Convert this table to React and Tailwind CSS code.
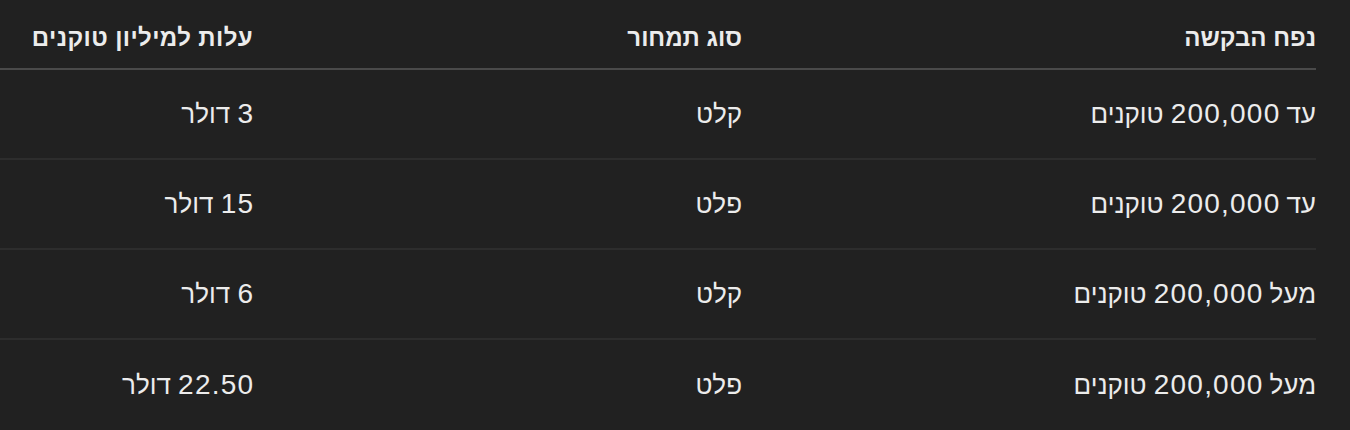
import React from "react";

const rows = [
  ["עד 200,000 טוקנים", "קלט", "3 דולר"],
  ["עד 200,000 טוקנים", "פלט", "15 דולר"],
  ["מעל 200,000 טוקנים", "קלט", "6 דולר"],
  ["מעל 200,000 טוקנים", "פלט", "22.50 דולר"],
];

function Cell({ text }) {
  const parts = text.split(/([\d.,]+)/);
  return (
    <div className="flex items-center">
      <span>
        {parts.map((p, i) =>
          /^[\d.,]+$/.test(p) ? (
            <span key={i} className="text-[28px] tracking-[1.2px] -mr-[1.2px]">
              {p}
            </span>
          ) : (
            <span key={i}>{p}</span>
          )
        )}
      </span>
    </div>
  );
}

export default function App() {
  return (
    <div
      className="w-[1350px] h-[430px] bg-[#212121] text-[#ececec] overflow-hidden"
      style={{ fontFamily: '"Liberation Sans", "DejaVu Sans", Arial, sans-serif' }}
    >
      <div dir="rtl" className="w-[1316px]">
        <div className="grid grid-cols-[574px_489px_253px] h-[70px] border-b-2 border-[#4a4a4a] text-[24px] font-bold">
          <div className="flex items-center pt-2">נפח הבקשה</div>
          <div className="flex items-center pt-2">סוג תמחור</div>
          <div className="flex items-center pt-2 tracking-[0.4px]">עלות למיליון טוקנים</div>
        </div>
        {rows.map((r, i) => (
          <div
            key={i}
            className={
              "grid grid-cols-[574px_489px_253px] h-[90px] text-[26px] leading-[32px] " +
              (i < rows.length - 1 ? "border-b-2 border-[#2d2d2d]" : "")
            }
          >
            <Cell text={r[0]} />
            <Cell text={r[1]} />
            <Cell text={r[2]} />
          </div>
        ))}
      </div>
    </div>
  );
}
